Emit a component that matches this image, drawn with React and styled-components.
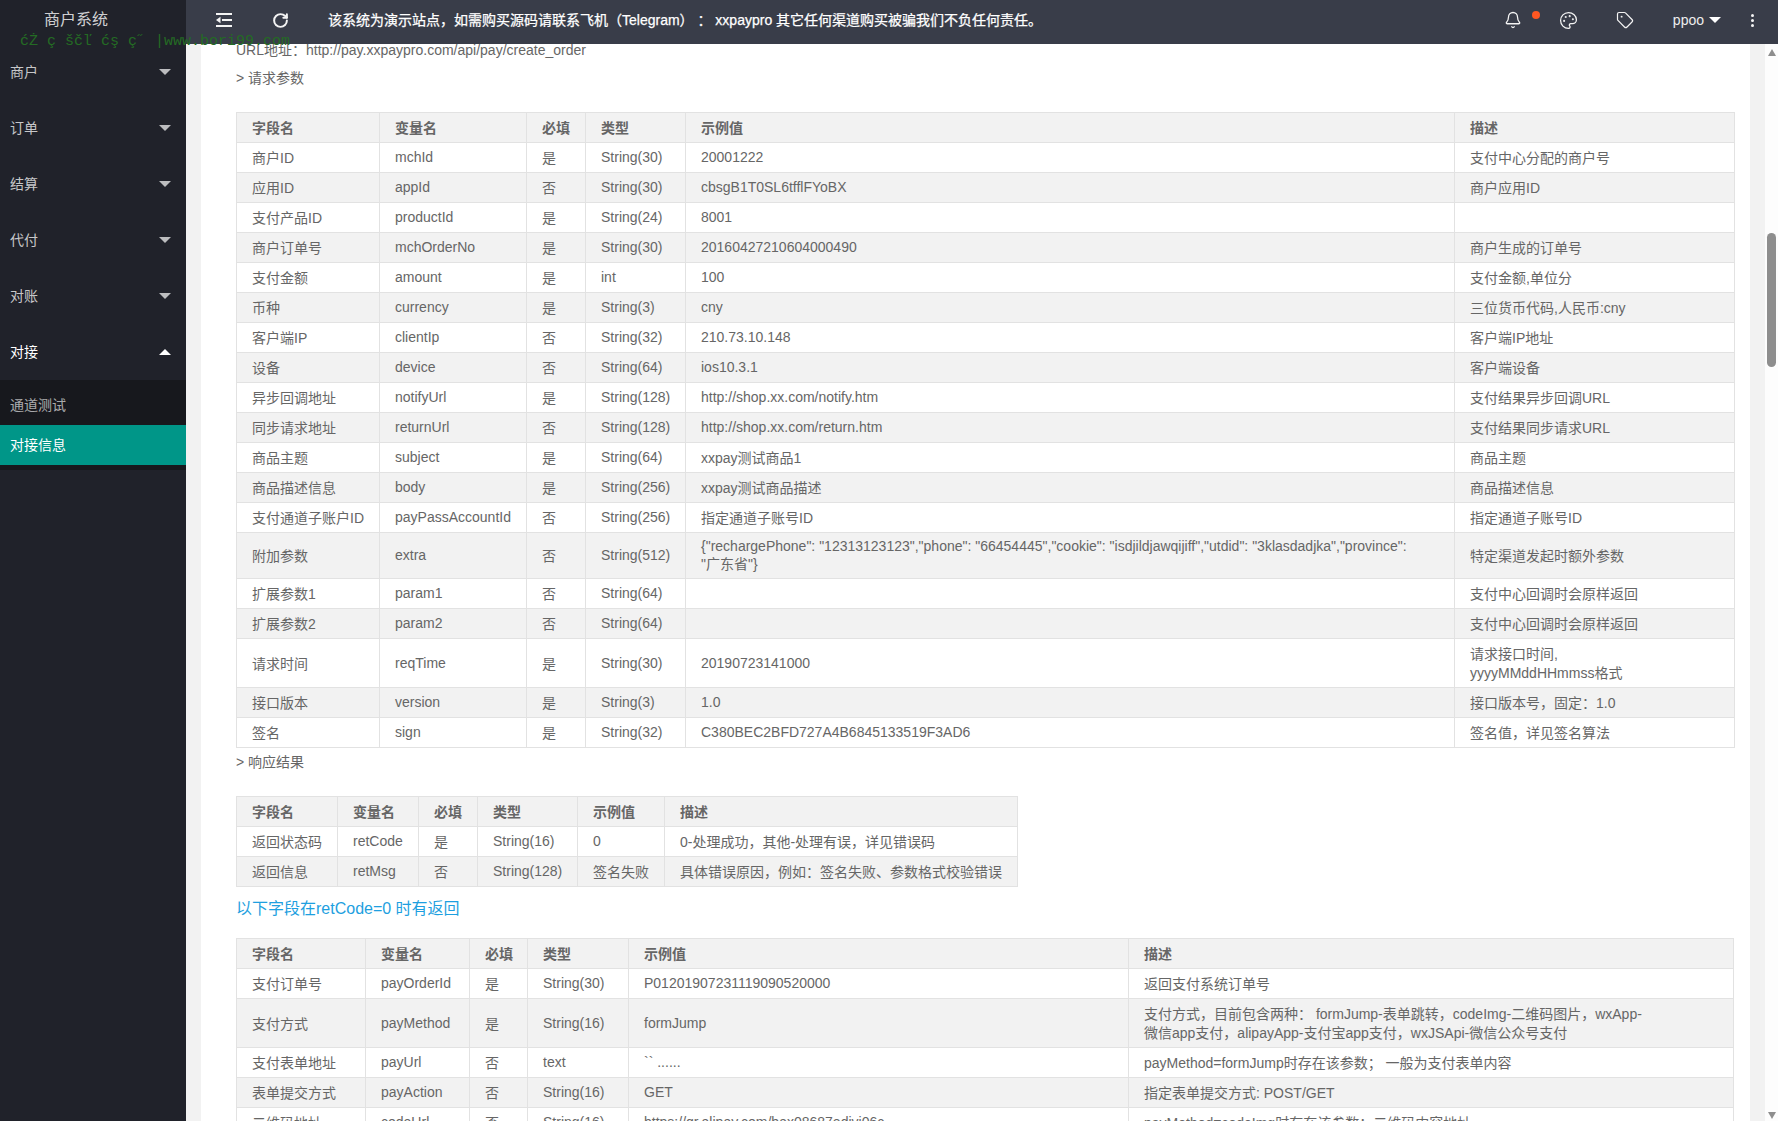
import React from "react";
import styled, { createGlobalStyle } from "styled-components";
import { Bell, Palette, Tag, RotateCw } from "lucide-react";

const Global = createGlobalStyle`
  html, body { margin: 0; padding: 0; height: 100%; overflow: hidden; }
  body { font-family: "Liberation Sans", "Noto Sans CJK SC", sans-serif; font-size: 14px; color: #666; }
  #root { height: 100%; }
`;

const Shell = styled.div`
  position: relative;
  display: flex;
  width: 1778px;
  height: 1121px;
  overflow: hidden;
  background: #f2f2f2;
`;
const Side = styled.aside`
  flex: 0 0 186px;
  display: flex;
  flex-direction: column;
  background: #20222a;
`;
const Logo = styled.div`
  height: 44px;
  padding-left: 44px;
  line-height: 39px;
  font-size: 16px;
  color: rgba(255, 255, 255, 0.8);
`;
const NavItem = styled.div`
  height: 56px;
  display: flex;
  align-items: center;
  justify-content: space-between;
  padding: 0 15px 0 10px;
  color: ${(p) => (p.$open ? "#fff" : "rgba(255,255,255,.75)")};
`;
const NavLabel = styled.span`
  margin-top: -2px;
`;
const Caret = styled.i`
  display: block;
  width: 0;
  height: 0;
  border-left: ${(p) => p.$size}px solid transparent;
  border-right: ${(p) => p.$size}px solid transparent;
  ${(p) => (p.$up ? "border-bottom" : "border-top")}: ${(p) => p.$h || p.$size}px solid ${(p) => p.$color};
`;
const SubNav = styled.div`
  padding: 5px 0;
  background: #17181d;
`;
const SubItem = styled.div`
  height: 40px;
  line-height: 40px;
  padding-left: 10px;
  color: ${(p) => (p.$active ? "#fff" : "rgba(255,255,255,.65)")};
  background: ${(p) => (p.$active ? "#009688" : "transparent")};
`;
const MainCol = styled.div`
  flex: 1;
  min-width: 0;
  display: flex;
  flex-direction: column;
`;
const Topbar = styled.header`
  flex: 0 0 44px;
  box-sizing: border-box;
  padding-bottom: 4px;
  position: relative;
  z-index: 2;
  display: flex;
  align-items: center;
  background: #393d49;
  color: #fff;
`;
const IconSlot = styled.div`
  display: flex;
  align-items: center;
  justify-content: center;
  flex: 0 0 auto;
  width: ${(p) => p.$w}px;
  margin-left: ${(p) => p.$ml}px;
  color: #f4f4f4;
`;
const Notice = styled.div`
  margin-left: 39px;
  flex: 1;
  white-space: nowrap;
  font-weight: 400;
  font-size: 14px;
  margin-top: -3px;
  -webkit-text-stroke: 0.25px #fff;
`;
const Dot = styled.span`
  width: 8px;
  height: 8px;
  border-radius: 50%;
  background: #ff5722;
  margin: -11px 0 0 10px;
`;
const User = styled.div`
  display: flex;
  align-items: center;
  gap: 5px;
  margin-left: 38px;
  color: #eee;
`;
const More = styled.div`
  display: flex;
  flex-direction: column;
  gap: 2px;
  margin: 0 24px 0 30px;
  span { width: 3px; height: 3px; border-radius: 50%; background: #f4f4f4; }
`;
const Body = styled.div`
  flex: 1;
  min-height: 0;
  display: flex;
  overflow: hidden;
`;
const Gutter = styled.div`
  flex: 1;
  min-width: 0;
  padding: 0 15px;
  overflow: hidden;
`;
const Card = styled.main`
  background: #fff;
  padding: 0 16px 0 35px;
  margin-top: -4px;
  height: 1100px;
  overflow: hidden;
`;
const Para = styled.p`
  margin: ${(p) => p.$mt || 0}px 0 ${(p) => p.$mb || 0}px;
  line-height: 20px;
  color: #666;
`;
const BlueTitle = styled.h4`
  margin: 12px 0 19px;
  font-size: 16px;
  font-weight: 400;
  line-height: 20px;
  color: #1e9fe0;
`;
const Table = styled.table`
  table-layout: fixed;
  width: ${(p) => p.$w}px;
  border-collapse: collapse;
  color: #666;
`;
const Th = styled.th`
  padding: 6px 15px 4px;
  line-height: 19px;
  border: 1px solid #e2e2e2;
  background: #f2f2f2;
  text-align: left;
  font-weight: 700;
  white-space: nowrap;
`;
const Td = styled.td`
  padding: ${(p) => (p.$latin ? "5px 15px" : "6px 15px 4px")};
  line-height: ${(p) => (p.$tight ? 17.5 : 19)}px;
  border: 1px solid #e2e2e2;
  white-space: nowrap;
`;
const Tr = styled.tr`
  background: ${(p) => (p.$even ? "#f2f2f2" : "#fff")};
`;
const Col = styled.col`
  width: ${(p) => p.$w}px;
`;
const Scroll = styled.div`
  flex: 0 0 13px;
  display: flex;
  flex-direction: column;
  align-items: center;
  background: #fdfdfd;
`;
const ArrowBox = styled.div`
  padding: ${(p) => p.$pad};
`;
const Thumb = styled.div`
  width: 9px;
  height: 134px;
  margin: 177px 0 0;
  border-radius: 5px;
  background: #8e8e8e;
`;
const Fill = styled.div`
  flex: 1;
`;
const Watermark = styled.div`
  position: absolute;
  z-index: 3;
  left: 20px;
  top: 33px;
  font-family: "Liberation Mono", monospace;
  font-size: 15px;
  line-height: 18px;
  white-space: pre;
  color: #246b24;
  pointer-events: none;
`;

const head3 = ["字段名", "变量名", "必填", "类型", "示例值", "描述"];

const reqRows = [
  ["商户ID", "mchId", "是", "String(30)", "20001222", "支付中心分配的商户号"],
  ["应用ID", "appId", "否", "String(30)", "cbsgB1T0SL6tfflFYoBX", "商户应用ID"],
  ["支付产品ID", "productId", "是", "String(24)", "8001", ""],
  ["商户订单号", "mchOrderNo", "是", "String(30)", "20160427210604000490", "商户生成的订单号"],
  ["支付金额", "amount", "是", "int", "100", "支付金额,单位分"],
  ["币种", "currency", "是", "String(3)", "cny", "三位货币代码,人民币:cny"],
  ["客户端IP", "clientIp", "否", "String(32)", "210.73.10.148", "客户端IP地址"],
  ["设备", "device", "否", "String(64)", "ios10.3.1", "客户端设备"],
  ["异步回调地址", "notifyUrl", "是", "String(128)", "http://shop.xx.com/notify.htm", "支付结果异步回调URL"],
  ["同步请求地址", "returnUrl", "否", "String(128)", "http://shop.xx.com/return.htm", "支付结果同步请求URL"],
  ["商品主题", "subject", "是", "String(64)", "xxpay测试商品1", "商品主题"],
  ["商品描述信息", "body", "是", "String(256)", "xxpay测试商品描述", "商品描述信息"],
  ["支付通道子账户ID", "payPassAccountId", "否", "String(256)", "指定通道子账号ID", "指定通道子账号ID"],
  ["附加参数", "extra", "否", "String(512)", ['{"rechargePhone": "12313123123","phone": "66454445","cookie": "isdjildjawqijiff","utdid": "3klasdadjka","province":', '"广东省"}'], "特定渠道发起时额外参数", true],
  ["扩展参数1", "param1", "否", "String(64)", "", "支付中心回调时会原样返回"],
  ["扩展参数2", "param2", "否", "String(64)", "", "支付中心回调时会原样返回"],
  ["请求时间", "reqTime", "是", "String(30)", "20190723141000", ["请求接口时间,", "yyyyMMddHHmmss格式"]],
  ["接口版本", "version", "是", "String(3)", "1.0", "接口版本号，固定：1.0"],
  ["签名", "sign", "是", "String(32)", "C380BEC2BFD727A4B6845133519F3AD6", "签名值，详见签名算法"],
];
const resRows = [
  ["返回状态码", "retCode", "是", "String(16)", "0", "0-处理成功，其他-处理有误，详见错误码"],
  ["返回信息", "retMsg", "否", "String(128)", "签名失败", "具体错误原因，例如：签名失败、参数格式校验错误"],
];
const okRows = [
  ["支付订单号", "payOrderId", "是", "String(30)", "P01201907231119090520000", "返回支付系统订单号"],
  ["支付方式", "payMethod", "是", "String(16)", "formJump", ["支付方式，目前包含两种： formJump-表单跳转，codeImg-二维码图片，wxApp-", "微信app支付，alipayApp-支付宝app支付，wxJSApi-微信公众号支付"]],
  ["支付表单地址", "payUrl", "否", "text", "`` ......", "payMethod=formJump时存在该参数； 一般为支付表单内容"],
  ["表单提交方式", "payAction", "否", "String(16)", "GET", "指定表单提交方式: POST/GET"],
  ["二维码地址", "codeUrl", "否", "String(16)", "https://qr.alipay.com/bax08687edjvi06c", "payMethod=codeImg时存在该参数；二维码内容地址"],
];

const isLatin = (v) => typeof v === "string" && /^[\x00-\x7f]*$/.test(v);

function Cell({ value, tight }) {
  if (Array.isArray(value)) {
    return (
      <Td $tight={tight} $latin={tight}>
        {value[0]}
        <br />
        {value[1]}
      </Td>
    );
  }
  return (
    <Td $tight={tight} $latin={isLatin(value)}>
      {value}
    </Td>
  );
}

function DocTable({ cols, rows }) {
  const total = cols.reduce((a, b) => a + b, 0);
  return (
    <Table $w={total}>
      <colgroup>
        {cols.map((w, i) => (
          <Col key={i} $w={w} />
        ))}
      </colgroup>
      <thead>
        <tr>
          {head3.map((h) => (
            <Th key={h}>{h}</Th>
          ))}
        </tr>
      </thead>
      <tbody>
        {rows.map((r, i) => (
          <Tr key={r[0]} $even={i % 2 === 1}>
            {r.slice(0, 6).map((c, j) => (
              <Cell key={j} value={c} tight={r[6]} />
            ))}
          </Tr>
        ))}
      </tbody>
    </Table>
  );
}

const CollapseIcon = () => (
  <svg width="17" height="14" viewBox="0 0 17 14" fill="#f4f4f4">
    <rect x="0" y="0" width="16" height="2" />
    <rect x="0" y="12" width="16" height="2" />
    <rect x="6" y="6" width="10" height="2" />
    <path d="M0 7 L4.5 3.8 V10.2 Z" />
  </svg>
);

const menu = ["商户", "订单", "结算", "代付", "对账"];

export default function App() {
  return (
    <Shell>
      <Global />
      <Side>
        <Logo>商户系统</Logo>
        {menu.map((m) => (
          <NavItem key={m}>
            <NavLabel>{m}</NavLabel>
            <Caret $size={6} $color="rgba(255,255,255,.7)" />
          </NavItem>
        ))}
        <NavItem $open>
          <NavLabel>对接</NavLabel>
          <Caret $size={6} $up $color="#fff" />
        </NavItem>
        <SubNav>
          <SubItem>通道测试</SubItem>
          <SubItem $active>对接信息</SubItem>
        </SubNav>
      </Side>
      <MainCol>
        <Topbar>
          <IconSlot $w={17} $ml={30}>
            <CollapseIcon />
          </IconSlot>
          <IconSlot $w={18} $ml={38}>
            <RotateCw size={17} strokeWidth={2.8} />
          </IconSlot>
          <Notice>该系统为演示站点，如需购买源码请联系飞机（Telegram） ： xxpaypro 其它任何渠道购买被骗我们不负任何责任。</Notice>
          <IconSlot $w={18} $ml={5}>
            <Bell size={18} strokeWidth={1.7} />
          </IconSlot>
          <Dot />
          <IconSlot $w={20} $ml={19}>
            <Palette size={19} strokeWidth={1.6} />
          </IconSlot>
          <IconSlot $w={20} $ml={36}>
            <Tag size={18} strokeWidth={1.6} />
          </IconSlot>
          <User>
            ppoo
            <Caret $size={6} $color="#fff" />
          </User>
          <More>
            <span />
            <span />
            <span />
          </More>
        </Topbar>
        <Body>
          <Gutter>
            <Card>
              <Para $mb={8}>URL地址：http://pay.xxpaypro.com/api/pay/create_order</Para>
              <Para $mb={24}>&gt; 请求参数</Para>
              <DocTable cols={[143, 147, 59, 100, 769, 280]} rows={reqRows} />
              <Para $mt={4} $mb={24}>&gt; 响应结果</Para>
              <DocTable cols={[101, 81, 59, 100, 87, 353]} rows={resRows} />
              <BlueTitle>以下字段在retCode=0 时有返回</BlueTitle>
              <DocTable cols={[129, 104, 58, 101, 500, 605]} rows={okRows} />
            </Card>
          </Gutter>
          <Scroll>
            <ArrowBox $pad="5px 0 0">
              <Caret $size={4} $h={7} $up $color="#8e8e8e" />
            </ArrowBox>
            <Thumb />
            <Fill />
            <ArrowBox $pad="0 0 2px">
              <Caret $size={4} $h={7} $color="#8e8e8e" />
            </ArrowBox>
          </Scroll>
        </Body>
      </MainCol>
      <Watermark>{"ćŻ ç ščľ ćş ç˝ |www.bori99.com"}</Watermark>
    </Shell>
  );
}
